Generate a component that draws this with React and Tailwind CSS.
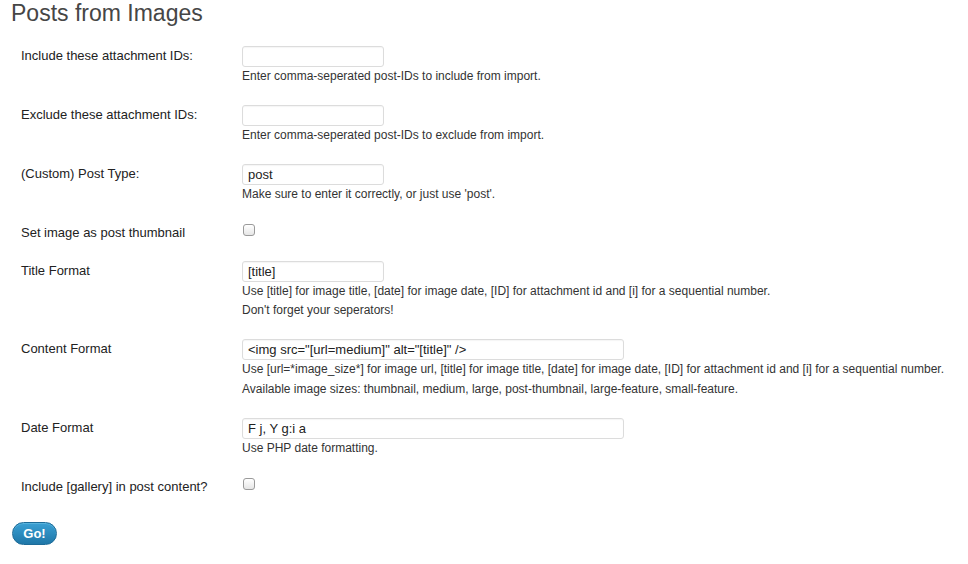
import React from 'react';

const font = { fontFamily: '"Liberation Sans", Arial, sans-serif' };

const TextField = ({ value, wide }) => (
    <input
        type="text"
        defaultValue={value}
        className={`${wide ? 'w-[382px]' : 'w-[142px]'} h-[21px] px-[5px] text-[13px] text-[#222] bg-white border border-[#dcdcdc] rounded-[3px] shadow-[inset_0_1px_1px_rgba(0,0,0,0.04)] outline-none`}
    />
);

const Check = () => (
    <span className="mt-[1px] block w-[12px] h-[12px] rounded-[3px] border border-[#9a9a9a] bg-gradient-to-b from-white to-[#e6e6e6]" />
);

const Desc = ({ children }) => (
    <p className="text-[12px] leading-[19.5px] text-[#333]">{children}</p>
);

const Row = ({ label, children }) => (
    <div className="flex">
        <div className="w-[242px] pl-[21px] text-[13px] leading-[19px] text-[#222]">{label}</div>
        <div className="flex flex-col">{children}</div>
    </div>
);

const App = () => {
    return (
        <div className="min-h-screen bg-white" style={font}>
            <h2 className="pl-[11px] text-[23px] leading-[26px] text-[#464646]">Posts from Images</h2>
            <div className="mt-[20px] flex flex-col gap-[18.5px]">
                <Row label="Include these attachment IDs:">
                    <TextField value="" />
                    <Desc>Enter comma-seperated post-IDs to include from import.</Desc>
                </Row>
                <Row label="Exclude these attachment IDs:">
                    <TextField value="" />
                    <Desc>Enter comma-seperated post-IDs to exclude from import.</Desc>
                </Row>
                <Row label="(Custom) Post Type:">
                    <TextField value="post" />
                    <Desc>Make sure to enter it correctly, or just use 'post'.</Desc>
                </Row>
                <Row label="Set image as post thumbnail">
                    <div className="pl-[1px]"><Check /></div>
                </Row>
                <Row label="Title Format">
                    <TextField value="[title]" />
                    <Desc>Use [title] for image title, [date] for image date, [ID] for attachment id and [i] for a sequential number.</Desc>
                    <Desc>Don't forget your seperators!</Desc>
                </Row>
                <Row label="Content Format">
                    <TextField wide value={'<img src="[url=medium]" alt="[title]" />'} />
                    <Desc>Use [url=*image_size*] for image url, [title] for image title, [date] for image date, [ID] for attachment id and [i] for a sequential number.</Desc>
                    <Desc>Available image sizes: thumbnail, medium, large, post-thumbnail, large-feature, small-feature.</Desc>
                </Row>
                <Row label="Date Format">
                    <TextField wide value="F j, Y g:i a" />
                    <Desc>Use PHP date formatting.</Desc>
                </Row>
                <Row label="Include [gallery] in post content?">
                    <div className="pl-[1px]"><Check /></div>
                </Row>
            </div>
            <div className="pl-[12px] mt-[25px]">
                <button className="h-[23px] w-[45px] rounded-full bg-gradient-to-b from-[#3aa0d4] to-[#1f77a8] border border-[#1d6b98] text-white text-[13px] font-bold leading-none shadow-[inset_0_1px_0_rgba(120,200,230,0.5)]">
                    Go!
                </button>
            </div>
        </div>
    );
};

export default App;
